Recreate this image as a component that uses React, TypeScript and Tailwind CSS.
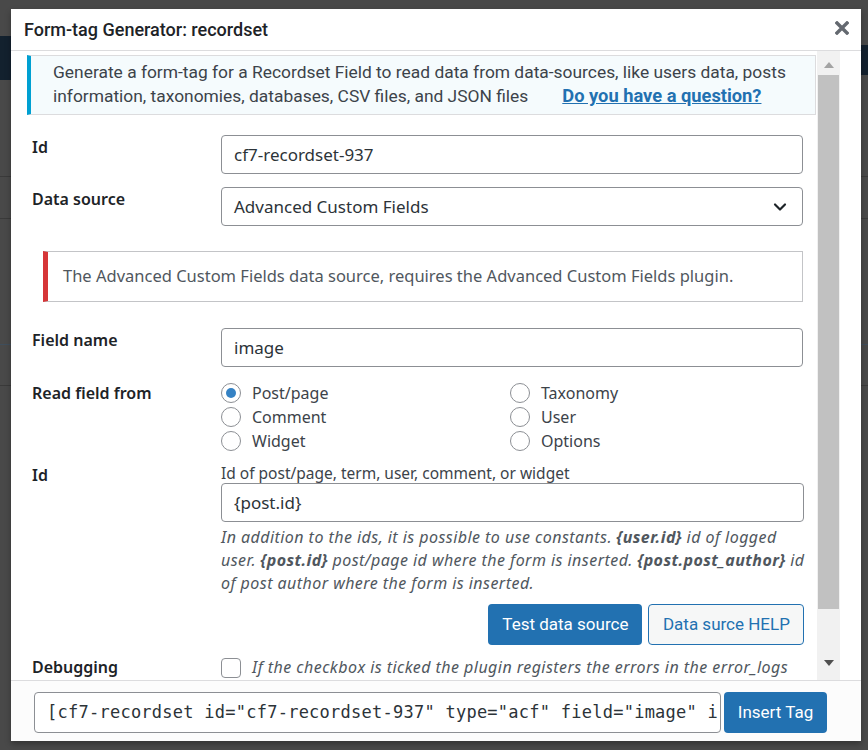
import { ChevronDown } from 'lucide-react';

// ─── Bits ─────────────────────────────────────────────────────────────────────

const SANS = "font-['Noto_Sans',sans-serif]";
const NARROW = "font-['Roboto',sans-serif]";

function Radio({ label, checked = false }: { label: string; checked?: boolean }) {
  return (
    <label className="flex h-[24px] items-center gap-[11px]">
      <span className="flex h-[20px] w-[20px] items-center justify-center rounded-full border border-[#8c8f94] bg-white">
        {checked && <span className="h-[10px] w-[10px] rounded-full bg-[#3582c4]" />}
      </span>
      <span className="text-[16px] text-[#3c434a]">{label}</span>
    </label>
  );
}

function Row({ label, children, className = '' }: { label: string; children: React.ReactNode; className?: string }) {
  return (
    <div className={`grid grid-cols-[194px_1fr] pr-[14px] ${className}`}>
      <div className="pl-[5px] text-[16px] font-semibold text-[#1d2327]">{label}</div>
      <div>{children}</div>
    </div>
  );
}

function TextBox({ value }: { value: string }) {
  return (
    <div className="flex h-[39px] items-center rounded-[4px] border border-[#8c8f94] bg-white px-[12px] text-[17px] text-[#2c3338]">
      {value}
    </div>
  );
}

// ─── App ──────────────────────────────────────────────────────────────────────

export default function App() {
  return (
    <div className={`relative h-[750px] w-[868px] overflow-hidden bg-[#494949] ${SANS}`}>
      {/* dimmed admin page behind the dialog */}
      <div className="absolute left-0 top-[36px] h-[44px] w-[20px] bg-[#13212e]" />
      <div className="absolute right-0 top-[45px] h-[30px] w-[20px] bg-[#13212e]" />
      <div className="absolute inset-x-0 top-[176px] h-px bg-[#3a3a3a]" />
      <div className="absolute inset-x-0 top-[218px] h-px bg-[#3a3a3a]" />
      <div className="absolute inset-x-0 top-[344px] h-px bg-[#3f4e5c]" />
      <div className="absolute inset-x-0 top-[385px] h-px bg-[#3a3a3a]" />

      {/* dialog */}
      <div className="absolute left-[11px] top-[9px] flex h-[732px] w-[850px] flex-col bg-white shadow-[0_3px_6px_rgba(0,0,0,0.3)]">
        <header className="flex h-[42px] shrink-0 items-center justify-between border-b border-[#dcdcde] pl-[13px] pr-[12px]">
          <h1 className={`${NARROW} text-[18px] font-medium text-[#1d2327]`}>Form-tag Generator: recordset</h1>
          <svg width="14" height="14" viewBox="0 0 14 14" className="mt-[-3px]">
            <path d="M2 2 L12 12 M12 2 L2 12" stroke="#646970" strokeWidth="3.4" strokeLinecap="square" />
          </svg>
        </header>

        <div className="flex min-h-0 flex-1">
          <div className="min-w-0 flex-1 overflow-hidden pl-[16px] pt-[4px]">
            <div className={`${NARROW} mr-px whitespace-nowrap border border-l-4 border-[#dcdcde] border-l-[#00a0d2] bg-[#f5fbfd] pb-[6px] pl-[22px] pt-[4px] text-[17.4px] leading-[24px] text-[#3c434a]`}>
              Generate a form-tag for a Recordset Field to read data from data-sources, like users data, posts
              <br />
              information, taxonomies, databases, CSV files, and JSON files
              <a className="ml-[34px] text-[18.3px] font-bold text-[#2271b1] underline">Do you have a question?</a>
            </div>

            <Row label="Id" className="mt-[20px]">
              <TextBox value="cf7-recordset-937" />
            </Row>

            <Row label="Data source" className="mt-[13px]">
              <div className="flex h-[39px] items-center justify-between rounded-[4px] border border-[#8c8f94] bg-white pl-[12px] pr-[12px] text-[17px] text-[#2c3338]">
                <span>Advanced Custom Fields</span>
                <ChevronDown className="h-[20px] w-[20px] text-[#1d2327]" strokeWidth={2.6} />
              </div>
            </Row>

            <div className="ml-[16px] mr-[14px] mt-[25px] flex h-[51px] items-center border border-l-[5px] border-[#c3c4c7] border-l-[#d63638] bg-white pl-[15px] text-[16.5px] text-[#50575e]">
              The Advanced Custom Fields data source, requires the Advanced Custom Fields plugin.
            </div>

            <Row label="Field name" className="mt-[26px]">
              <TextBox value="image" />
            </Row>

            <Row label="Read field from" className="mt-[14px]">
              <div className="grid grid-cols-[289px_1fr]">
                <div className="flex flex-col">
                  <Radio label="Post/page" checked />
                  <Radio label="Comment" />
                  <Radio label="Widget" />
                </div>
                <div className="flex flex-col">
                  <Radio label="Taxonomy" />
                  <Radio label="User" />
                  <Radio label="Options" />
                </div>
              </div>
            </Row>

            <Row label="Id" className="mt-[10px]">
              <div className="text-[15.5px] leading-[20px] text-[#3c434a]">Id of post/page, term, user, comment, or widget</div>
              <TextBox value="{post.id}" />
              <p className="mt-[4px] whitespace-nowrap text-[16px] italic leading-[23px] tracking-[0.45px] text-[#50575e]">
                In addition to the ids, it is possible to use constants. <b>{'{user.id}'}</b> id of logged
                <br />
                user. <b>{'{post.id}'}</b> post/page id where the form is inserted. <b>{'{post.post_author}'}</b> id
                <br />
                of post author where the form is inserted.
              </p>
              <div className={`${NARROW} mt-[9px] flex justify-end gap-[6px] text-[17px]`}>
                <button className="h-[41px] rounded-[4px] bg-[#2271b1] px-[14px] text-white">Test data source</button>
                <button className="h-[41px] w-[156px] rounded-[4px] border border-[#2271b1] bg-[#f6f7f7] text-[#2271b1]">
                  Data surce HELP
                </button>
              </div>
            </Row>

            <Row label="Debugging" className="mt-[10px]">
              <div className="flex items-start gap-[11px] pt-[3px]">
                <span className="h-[20px] w-[20px] shrink-0 rounded-[4px] border border-[#8c8f94] bg-white" />
                <span className="mt-[-2px] text-[16px] italic leading-[23px] tracking-[0.45px] text-[#50575e]">
                  If the checkbox is ticked the plugin registers the errors in the error_logs file
                </span>
              </div>
            </Row>
          </div>

          {/* scrollbar */}
          <div className="flex w-[23px] shrink-0 flex-col items-center bg-[#f1f1f1] pt-[2px]">
            <svg width="12" height="8" viewBox="0 0 12 8" className="mt-[8px]">
              <path d="M1 7 L6 1 L11 7 Z" fill="#a3a3a3" />
            </svg>
            <div className="mt-[6px] h-[534px] w-[21px] bg-[#c1c1c1]" />
            <svg width="12" height="8" viewBox="0 0 12 8" className="mt-[50px]">
              <path d="M1 1 L6 7 L11 1 Z" fill="#505050" />
            </svg>
          </div>
          <div className="w-[21px] shrink-0" />
        </div>

        <footer className="flex h-[61px] shrink-0 items-start gap-[3px] border-t border-[#dcdcde] bg-[#fcfcfc] pl-[23px] pt-[11px]">
          <div className="flex h-[41px] w-[687px] items-center overflow-hidden whitespace-nowrap rounded-[4px] border border-[#8c8f94] bg-white pl-[12px] font-['DejaVu_Sans_Mono',monospace] text-[17px] tracking-[0.25px] text-[#2c3338]">
            [cf7-recordset id="cf7-recordset-937" type="acf" field="image" i
          </div>
          <button className={`${NARROW} h-[41px] w-[103px] rounded-[4px] bg-[#2271b1] text-[17px] text-white`}>Insert Tag</button>
        </footer>
      </div>
    </div>
  );
}
